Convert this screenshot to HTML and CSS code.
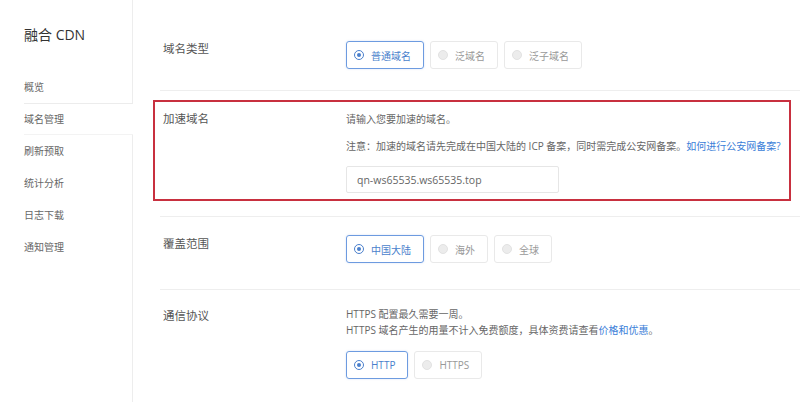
FILE: index.html
```html
<!DOCTYPE html>
<html>
  <head>
    <meta charset="UTF-8" />
    <title>融合 CDN - 添加域名</title>
    <link rel="stylesheet" href="styles.css">
  </head>
  <body>
    <div class="layout">
      <aside class="sidebar">
        <div class="sidebar-title">融合 CDN</div>
        <ul class="nav">
          <li>概览</li>
          <li class="active">域名管理</li>
          <li>刷新预取</li>
          <li>统计分析</li>
          <li>日志下载</li>
          <li>通知管理</li>
        </ul>
      </aside>

      <main class="content">
        <!-- domain type -->
        <div class="row row-type">
          <div class="label">域名类型</div>
          <div class="field">
            <div class="radio-group">
              <span class="radio checked"><i></i>普通域名</span>
              <span class="radio"><i></i>泛域名</span>
              <span class="radio"><i></i>泛子域名</span>
            </div>
          </div>
        </div>

        <!-- accelerated domain -->
        <div class="row row-domain">
          <div class="highlight">
            <div class="label">加速域名</div>
            <div class="field">
              <p class="hint">请输入您要加速的域名。</p>
              <p class="hint hint-note">注意：加速的域名请先完成在中国大陆的 ICP 备案，同时需完成公安网备案。<a href="#">如何进行公安网备案?</a></p>
              <input class="text-input" type="text" value="qn-ws65535.ws65535.top" />
            </div>
          </div>
        </div>

        <!-- coverage -->
        <div class="row row-area">
          <div class="label">覆盖范围</div>
          <div class="field">
            <div class="radio-group">
              <span class="radio checked"><i></i>中国大陆</span>
              <span class="radio"><i></i>海外</span>
              <span class="radio"><i></i>全球</span>
            </div>
          </div>
        </div>

        <!-- protocol -->
        <div class="row row-protocol">
          <div class="label">通信协议</div>
          <div class="field">
            <p class="desc">HTTPS 配置最久需要一周。</p>
            <p class="desc">HTTPS 域名产生的用量不计入免费额度，具体资费请查看<a href="#">价格和优惠</a>。</p>
            <div class="radio-group protocol-group">
              <span class="radio checked"><i></i>HTTP</span>
              <span class="radio"><i></i>HTTPS</span>
            </div>
          </div>
        </div>
      </main>
    </div>
  </body>
</html>
```

FILE: styles.css
```css
body {
  margin: 0;
  font-family: "Open Sans", "Noto Sans CJK SC", sans-serif;
  color: #666;
  background: #fff;
}

.layout {
  display: flex;
  height: 402px;
  overflow: hidden;
}

/* sidebar */

.sidebar {
  width: 133px;
  flex-shrink: 0;
  border-right: 1px solid #ededed;
  padding-left: 24px;
  box-sizing: border-box;
}

.sidebar-title {
  font-size: 14px;
  line-height: 20px;
  color: #333;
  margin-top: 25px;
}

.nav {
  list-style: none;
  margin: 26px 0 0;
  padding: 0;
}

.nav li {
  font-size: 10px;
  line-height: 31px;
  height: 31px;
  border-top: 1px solid transparent;
  color: #666;
}

.nav li.active {
  background: #fff;
  margin-right: -1px;
  border-top-color: #ececec;
  border-bottom: 1px solid #f3f3f3;
  height: 30px;
  line-height: 30px;
}

/* form rows */

.content {
  flex: 1;
  padding-left: 27px;
}

.row {
  display: flex;
  border-bottom: 1px solid #eeeeee;
}

.label {
  width: 186px;
  flex-shrink: 0;
  padding-left: 3px;
  box-sizing: border-box;
  font-size: 11.5px;
  line-height: 16px;
  color: #555;
}

.field {
  flex: 1;
}

.row-type {
  padding: 41px 0 21px;
}

.row-area {
  padding: 18px 0 26px;
}

.row-area .label {
  margin-top: 1px;
}

.row-protocol {
  padding-top: 16px;
  border-bottom: none;
}

.row-protocol .label {
  margin-top: 2px;
}

/* red outline around the domain row */

.row-domain {
  padding: 9px 9px 15px 0;
}

.highlight {
  flex: 1;
  display: flex;
  margin-left: -7px;
  border: 2px solid #c8303f;
  padding: 9px 0 6px 5px;
}

.hint {
  margin: 0;
  font-size: 10px;
  line-height: 16px;
}

.hint-note {
  margin-top: 11px;
}

a {
  color: #3b7ed8;
  text-decoration: none;
}

.text-input {
  display: block;
  margin-top: 12px;
  width: 213px;
  height: 27px;
  box-sizing: border-box;
  border: 1px solid #e6e6e6;
  border-radius: 2px;
  padding: 0 10px;
  font-family: "Open Sans", sans-serif;
  font-size: 10.5px;
  color: #666;
  outline: none;
}

.desc {
  margin: 0;
  font-size: 10px;
  line-height: 16px;
}

/* radio buttons */

.radio-group {
  display: flex;
  gap: 6px;
}

.protocol-group {
  margin-top: 13px;
}

.radio {
  display: inline-flex;
  align-items: center;
  height: 28px;
  box-sizing: border-box;
  padding: 0 12px 0 7px;
  border: 1px solid #e9e9e9;
  border-radius: 3px;
  font-size: 10px;
  color: #999;
}

.radio i {
  width: 10px;
  height: 10px;
  box-sizing: border-box;
  border-radius: 50%;
  background: #ececec;
  border: 1px solid #e2e2e2;
  margin-right: 7px;
  position: relative;
}

.radio.checked {
  border-color: #6d9be0;
  color: #4a7fcc;
  box-shadow: 0 0 2px rgba(80, 130, 210, 0.25);
}

.radio.checked i {
  background: #fff;
  border-color: #4a7fcc;
}

.radio.checked i::after {
  content: "";
  position: absolute;
  left: 2px;
  top: 2px;
  width: 4px;
  height: 4px;
  border-radius: 50%;
  background: #4a7fcc;
}
```
